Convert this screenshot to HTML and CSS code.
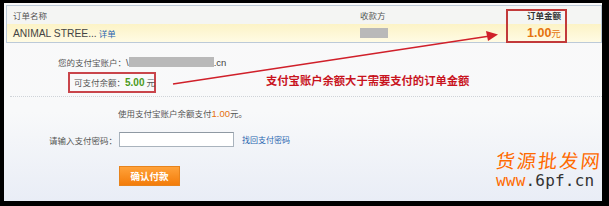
FILE: index.html
```html
<!DOCTYPE html>
<html lang="zh-CN">
<head>
<meta charset="utf-8">
<title>确认付款</title>
<link rel="stylesheet" href="styles.css">
</head>
<body>
<div class="frame">
  <div class="order">
    <div class="row head">
      <div class="c1">订单名称</div>
      <div class="c2">收款方</div>
      <div class="c3 strong">订单金额</div>
    </div>
    <div class="row data">
      <div class="c1"><span class="latin big">ANIMAL STREE...</span> <a class="link">详单</a></div>
      <div class="c2"><span class="blur payee"></span></div>
      <div class="c3"><span class="amount">1.00</span><span class="yuan">元</span></div>
    </div>
  </div>

  <div class="main">
    <div class="account">您的支付宝账户：<span class="latin">\</span><span class="blur acct"></span><span class="latin">.cn</span></div>
    <div class="balance">可支付余额：<span class="green">5.00</span> 元</div>
    <div class="sep"></div>
    <div class="payline">使用支付宝账户余额支付<span class="orange">1.00</span>元。</div>
    <div class="pwd">
      <span class="label">请输入支付密码：</span>
      <span class="input"></span>
      <a class="link">找回支付密码</a>
    </div>
    <div class="btn">确认付款</div>
  </div>

  <div class="hl-amount"></div>
  <div class="note">支付宝账户余额大于需要支付的订单金额</div>
  <svg class="arrow" width="598" height="198" viewBox="0 0 598 198">
    <line x1="169" y1="81" x2="486" y2="33" stroke="#d0202a" stroke-width="1.6"/>
    <polygon points="494,31.5 482,28 484,38" fill="#d0202a"/>
  </svg>
  <div class="mark">
    <div class="mark-cn">货源批发网</div>
    <div class="mark-url"><span class="orange2">www</span>.6pf.cn</div>
  </div>
</div>
</body>
</html>
```

FILE: styles.css
```css
html, body {
  margin: 0;
  padding: 0;
  background: #000;
}
body {
  width: 609px;
  height: 206px;
  overflow: hidden;
  font-family: "Noto Sans CJK SC", "Liberation Sans", sans-serif;
  font-size: 8.5px;
  color: #555;
}
.frame {
  position: relative;
  width: 598px;
  height: 198px;
  margin: 3px 0 0 4px;
  background: linear-gradient(to bottom, #f9f9f9 0%, #f8f9fa 55%, #e9edf6 100%);
  overflow: hidden;
}
.order {
  margin: 2px 0 0 2px;
  width: 594px;
  border: 1px solid #bccad8;
}
.row {
  display: flex;
  height: 18px;
  align-items: center;
}
.head {
  background: #f4f5f3;
}
.data {
  background: linear-gradient(to bottom, #fcf3c6, #fffbe4);
}
.c1 {
  width: 347px;
  padding-left: 6px;
  white-space: nowrap;
}
.c2 {
  width: 150px;
  display: flex;
  align-items: center;
}
.c3 {
  flex: 1;
  padding-left: 17px;
  display: flex;
  align-items: baseline;
}
.strong {
  font-weight: bold;
  color: #333;
}
.latin {
  font-family: "Liberation Sans", sans-serif;
  font-size: 9.5px;
  color: #444;
}
.latin.big {
  font-size: 10.3px;
}
.link {
  color: #2a66b0;
}
.blur {
  display: inline-block;
  background: #b9b9b9;
}
.payee {
  width: 28px;
  height: 10px;
}
.acct {
  width: 85px;
  height: 10px;
  vertical-align: -1px;
}
.amount {
  font-family: "Liberation Sans", sans-serif;
  font-weight: bold;
  font-size: 12.5px;
  color: #e5720e;
}
.yuan {
  font-size: 9.5px;
  color: #e5720e;
}
.main {
  padding-top: 13px;
}
.account {
  margin-left: 54px;
  height: 12px;
  line-height: 12px;
  white-space: nowrap;
}
.balance {
  margin: 4px 0 0 64px;
  width: 80px;
  height: 17px;
  line-height: 17px;
  padding-left: 4px;
  border: 2px solid #c9454b;
  white-space: nowrap;
}
.green {
  font-family: "Liberation Sans", sans-serif;
  font-weight: bold;
  font-size: 10px;
  color: #4b9a1b;
}
.sep {
  margin: 3px 0 0 6px;
  width: 592px;
  border-top: 1px dotted #cfd3d8;
}
.payline {
  margin: 10px 0 0 114px;
  height: 12px;
  line-height: 12px;
}
.orange {
  font-family: "Liberation Sans", sans-serif;
  font-size: 9.5px;
  color: #e5720e;
}
.pwd {
  margin-top: 13px;
  display: flex;
  align-items: center;
  height: 15px;
}
.label {
  width: 113px;
  text-align: right;
  white-space: nowrap;
}
.input {
  display: block;
  margin-left: 2px;
  width: 113px;
  height: 13px;
  background: #fff;
  border: 1px solid #a9b3bd;
  border-top-color: #8f99a3;
}
.pwd .link {
  margin-left: 8px;
  font-size: 8px;
}
.btn {
  margin: 19px 0 0 115px;
  width: 59px;
  height: 18px;
  line-height: 18px;
  text-align: center;
  color: #fff;
  font-weight: bold;
  font-size: 9.5px;
  background: linear-gradient(to bottom, #ffa23a, #f37c0a);
  border: 1px solid #e7831c;
}
.hl-amount {
  position: absolute;
  left: 502px;
  top: 6px;
  width: 57px;
  height: 30px;
  border: 2px solid #c23a3a;
}
.note {
  position: absolute;
  left: 262px;
  top: 70px;
  font-size: 11.3px;
  line-height: 14px;
  font-weight: bold;
  color: #c8141e;
  white-space: nowrap;
}
.arrow {
  position: absolute;
  left: 0;
  top: 0;
}
.mark {
  position: absolute;
  left: 492px;
  top: 145px;
  color: #ff6a00;
}
.mark-cn {
  font-size: 19px;
  line-height: 24px;
  letter-spacing: 2.2px;
  transform: skewX(-6deg);
}
.mark-url {
  font-family: "DejaVu Sans Mono", monospace;
  font-size: 16px;
  line-height: 18px;
  color: #333;
  letter-spacing: 0.2px;
}
.orange2 {
  color: #ff6a00;
}
```
